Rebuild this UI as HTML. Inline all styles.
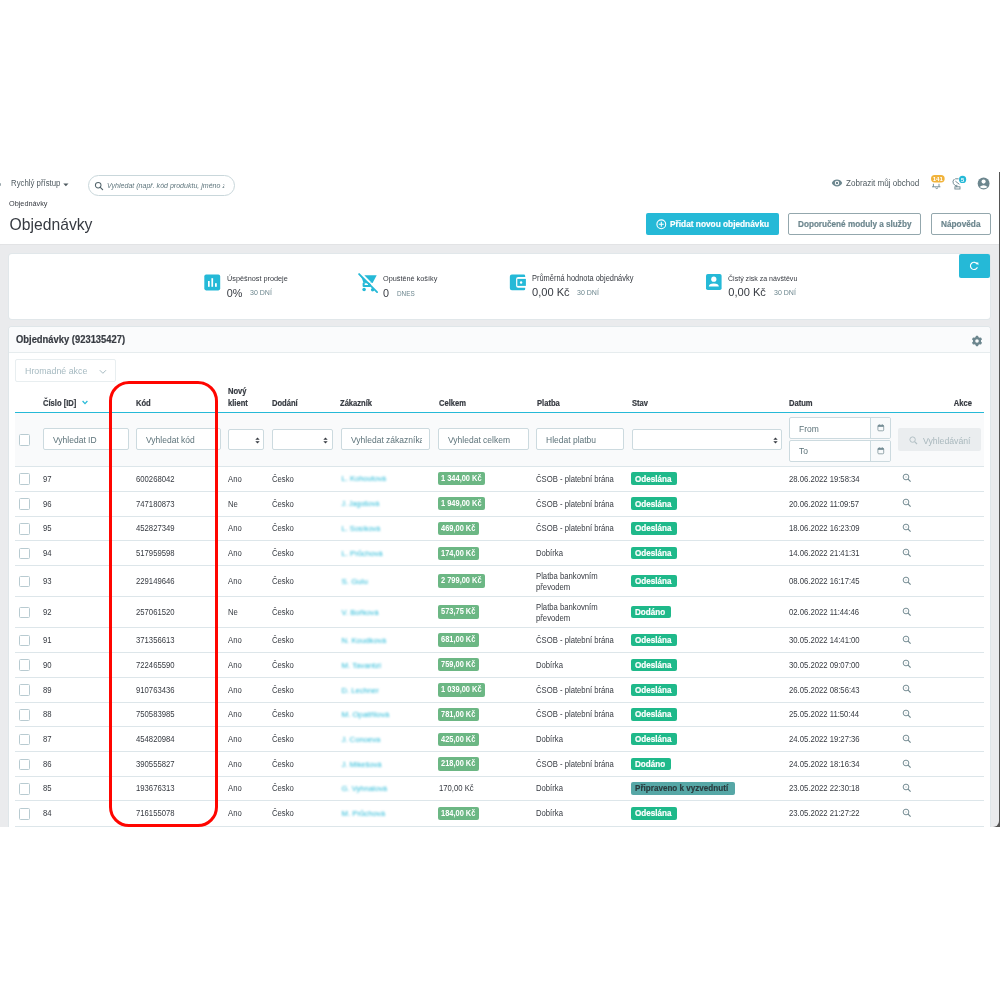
<!DOCTYPE html>
<html><head><meta charset="utf-8"><title>Objednávky</title>
<style>
html,body{margin:0;padding:0;background:#fff;}
body{width:1000px;height:1000px;position:relative;overflow:hidden;font-family:"Liberation Sans",sans-serif;}
.t{position:absolute;white-space:nowrap;}
.b{position:absolute;}
</style></head><body><div id="w" style="position:absolute;left:0;top:0;width:1000px;height:1000px;will-change:transform">
<div class="b" style="left:985.00px;top:172.00px;width:15.00px;height:655.00px;background:#555"></div>
<div class="b" style="left:0.00px;top:243.70px;width:998.80px;height:583.30px;background:#eaebed;border-bottom-right-radius:6px;box-shadow:inset 0 1px 1px rgba(0,0,0,0.035)"></div>
<div class="b" style="left:0.00px;top:172.00px;width:998.80px;height:72.00px;background:#fff"></div>
<div class="b" style="left:0.00px;top:183.00px;width:1.30px;height:3.00px;background:#9aa7ad;border-radius:0 2px 2px 0"></div>
<div class="t" style="left:11.40px;top:179.44px;font-size:8.580px;line-height:8.580px;font-weight:400;color:#4f5a60;transform:scaleX(0.9091);transform-origin:0 0;">Rychlý přístup</div>
<svg class="b" style="left:63px;top:183px" width="6" height="4" viewBox="0 0 6 4"><path d="M0.3 0.5 L5.5 0.5 L2.9 3.3 Z" fill="#4f5a60"/></svg>
<div class="b" style="left:88.00px;top:175.00px;width:147.00px;height:20.60px;box-sizing:border-box;border:1px solid #c9d7db;border-radius:11px;background:#fff"></div>
<svg class="b" style="left:94px;top:181px" width="10" height="10" viewBox="0 0 10 10"><circle cx="4.2" cy="4.2" r="2.8" fill="none" stroke="#51636a" stroke-width="1.05"/><path d="M6.3 6.3 L8.6 8.6" stroke="#51636a" stroke-width="1.2" stroke-linecap="round"/></svg>
<div class="t" style="left:107.20px;top:182.14px;font-size:7.755px;line-height:7.755px;font-weight:400;color:#5f767d;transform:scaleX(0.9091);transform-origin:0 0;font-style:italic;width:129.36px;overflow:hidden">Vyhledat (např. kód produktu, jméno z</div>
<div class="t" style="left:9.00px;top:199.70px;font-size:8.030px;line-height:8.030px;font-weight:400;color:#363a41;transform:scaleX(0.9091);transform-origin:0 0;">Objednávky</div>
<div class="t" style="left:9.60px;top:216.61px;font-size:15.700px;line-height:15.700px;font-weight:400;color:#363a41;">Objednávky</div>
<svg class="b" style="left:831px;top:179.3px;overflow:visible" width="12" height="8" viewBox="0 0 12 8"><path d="M0.8 4 C2.6 -0.6 9.4 -0.6 11.2 4 C9.4 8.6 2.6 8.6 0.8 4 Z" fill="#6c868e"/><circle cx="6" cy="4" r="2.2" fill="#fff"/><circle cx="6" cy="4" r="1.2" fill="#6c868e"/></svg>
<div class="t" style="left:845.70px;top:179.26px;font-size:8.910px;line-height:8.910px;font-weight:400;color:#4f5a60;transform:scaleX(0.9091);transform-origin:0 0;">Zobrazit můj obchod</div>
<svg class="b" style="left:925px;top:172px" width="70" height="23" viewBox="0 0 70 23"><rect x="6" y="3.1" width="13.7" height="7.4" rx="3.7" fill="#f1b33b"/><text x="12.85" y="9.2" font-family="Liberation Sans" font-size="6.2" font-weight="700" fill="#fff" text-anchor="middle">141</text><path d="M7 14.8 L15.4 14.8 M8.4 11.8 V14.8 M14 11.8 V14.8 M10.4 15.8 L11.8 16.6 L13 15.8" stroke="#6c868e" stroke-width="0.9" fill="none"/><path d="M29.4 7 Q27 9 28.4 11.6 Q29.6 13.5 31.6 14.2 M30.2 6.8 L33.6 6.8 M30.4 9.2 L34.4 12.3 M31.8 12.8 V15.2" stroke="#6c868e" stroke-width="0.95" fill="none"/><rect x="29.9" y="14.8" width="5.1" height="2.2" fill="none" stroke="#6c868e" stroke-width="0.9"/><circle cx="37.6" cy="7.4" r="3.6" fill="#25b9d7"/><text x="37.6" y="9.5" font-family="Liberation Sans" font-size="5.8" font-weight="700" fill="#fff" text-anchor="middle">5</text><circle cx="58.6" cy="11.5" r="5.95" fill="#6c868e"/><circle cx="58.6" cy="9.6" r="2.05" fill="#fff"/><path d="M54.6 14.9 Q58.6 11.6 62.6 14.9 Q58.6 17.8 54.6 14.9 Z" fill="#fff"/></svg>
<div class="b" style="left:646.00px;top:213.00px;width:132.90px;height:21.60px;background:#25b9d7;border-radius:2px"></div>
<svg class="b" style="left:656.3px;top:218.7px" width="11" height="11" viewBox="0 0 11 11"><circle cx="5.3" cy="5.3" r="4.4" fill="none" stroke="#fff" stroke-width="1.1"/><path d="M5.3 2.8 V7.8 M2.8 5.3 H7.8" stroke="#fff" stroke-width="1.1"/></svg>
<div class="t" style="left:669.60px;top:220.37px;font-size:9.130px;line-height:9.130px;font-weight:700;color:#fff;transform:scaleX(0.9091);transform-origin:0 0;-webkit-text-stroke:0.2px currentColor;">Přidat novou objednávku</div>
<div class="b" style="left:788.30px;top:212.50px;width:133.20px;height:22.00px;box-sizing:border-box;border:1px solid #93a7ad;border-radius:2px;background:#fff"></div>
<div class="t" style="left:798.00px;top:220.28px;font-size:8.998px;line-height:8.998px;font-weight:700;color:#6c868e;transform:scaleX(0.9091);transform-origin:0 0;-webkit-text-stroke:0.2px currentColor;">Doporučené moduly a služby</div>
<div class="b" style="left:930.50px;top:212.50px;width:60.10px;height:22.00px;box-sizing:border-box;border:1px solid #93a7ad;border-radius:2px;background:#fff"></div>
<div class="t" style="left:940.60px;top:220.19px;font-size:9.108px;line-height:9.108px;font-weight:700;color:#6c868e;transform:scaleX(0.9091);transform-origin:0 0;-webkit-text-stroke:0.2px currentColor;">Nápověda</div>
<div class="b" style="left:9.00px;top:254.40px;width:981.00px;height:64.60px;background:#fff;border-radius:3px;box-shadow:0 0 0 1px #e1e7ea"></div>
<div class="b" style="left:958.60px;top:254.00px;width:31.30px;height:24.00px;background:#25b9d7;border-radius:2px"></div>
<svg class="b" style="left:968px;top:260px" width="12" height="12" viewBox="0 0 12 12"><path d="M9.2 4.2 A3.6 3.6 0 1 0 9.4 7.2" fill="none" stroke="#fff" stroke-width="1.1"/><path d="M7.6 2.4 L10.4 2.4 L10.4 5.2 Z" fill="#fff"/></svg>
<svg class="b" style="left:200px;top:270px" width="24" height="24" viewBox="0 0 24 24"><rect x="4.3" y="4.6" width="15.9" height="15.8" rx="1.8" fill="#25b9d7"/><rect x="8.0" y="11.0" width="1.7" height="5.8" fill="#fff"/><rect x="11.4" y="8.2" width="1.7" height="8.6" fill="#fff"/><rect x="15.0" y="13.2" width="1.8" height="3.6" fill="#fff"/></svg>
<div class="t" style="left:226.80px;top:274.90px;font-size:8.030px;line-height:8.030px;font-weight:400;color:#363a41;transform:scaleX(0.9091);transform-origin:0 0;">Úspěšnost prodeje</div>
<div class="t" style="left:226.80px;top:287.86px;font-size:10.800px;line-height:10.800px;font-weight:400;color:#363a41;">0%</div>
<div class="t" style="left:249.60px;top:288.94px;font-size:7.744px;line-height:7.744px;font-weight:400;color:#6c868e;transform:scaleX(0.9091);transform-origin:0 0;">30 DNÍ</div>
<svg class="b" style="left:355px;top:270px" width="26" height="26" viewBox="0 0 26 26"><path d="M4.3 4.3 L13 13 L8.4 12.8 Q7.8 9.2 4.3 4.3 Z" fill="#25b9d7"/><path fill-rule="evenodd" d="M8.6 12.4 L15 12.4 Q16 12.4 16 13.4 L16 15.9 Q16 16.9 15 16.9 L8.6 16.9 Q7.6 16.9 7.6 15.9 L7.6 13.4 Q7.6 12.4 8.6 12.4 Z M9.8 13.3 L12.6 13.3 L13.3 15.0 L9.6 15.0 Z" fill="#25b9d7"/><path d="M9.3 5.2 L21.7 5.2 L17.6 12.9 L16.9 12.9 Z" fill="#25b9d7"/><circle cx="9.1" cy="19.5" r="1.8" fill="#25b9d7"/><circle cx="17.6" cy="19.7" r="1.7" fill="#25b9d7"/><path d="M5.3 4 L23.3 22 L24.6 22 L6.6 4 Z" fill="#fff"/><path d="M4.1 4.1 L22.1 22.1" stroke="#25b9d7" stroke-width="1.85" stroke-linecap="round"/></svg>
<div class="t" style="left:382.60px;top:274.90px;font-size:8.030px;line-height:8.030px;font-weight:400;color:#363a41;transform:scaleX(0.9091);transform-origin:0 0;">Opuštěné košíky</div>
<div class="t" style="left:383.00px;top:287.86px;font-size:10.800px;line-height:10.800px;font-weight:400;color:#363a41;">0</div>
<div class="t" style="left:396.80px;top:289.54px;font-size:7.040px;line-height:7.040px;font-weight:400;color:#6c868e;transform:scaleX(0.9091);transform-origin:0 0;">DNES</div>
<svg class="b" style="left:506px;top:271px" width="24" height="24" viewBox="0 0 24 24"><path d="M3.84 5.6 Q3.84 3.6 5.84 3.6 L17.8 3.6 Q19.2 3.6 19.2 4.9 L19.2 5.9 L12.1 5.9 Q10.1 5.9 10.1 7.9 L10.1 14.8 Q10.1 16.8 12.1 16.8 L19.2 16.8 L19.2 17.9 Q19.2 19.2 17.8 19.2 L5.84 19.2 Q3.84 19.2 3.84 17.2 Z" fill="#25b9d7"/><rect x="11.3" y="7.9" width="8.6" height="7" fill="#25b9d7"/><circle cx="15.1" cy="11.5" r="1.2" fill="#fff"/></svg>
<div class="t" style="left:531.50px;top:274.76px;font-size:8.195px;line-height:8.195px;font-weight:400;color:#363a41;transform:scaleX(0.9091);transform-origin:0 0;">Průměrná hodnota objednávky</div>
<div class="t" style="left:532.00px;top:287.40px;font-size:11.100px;line-height:11.100px;font-weight:400;color:#363a41;">0,00 Kč</div>
<div class="t" style="left:577.30px;top:288.94px;font-size:7.744px;line-height:7.744px;font-weight:400;color:#6c868e;transform:scaleX(0.9091);transform-origin:0 0;">30 DNÍ</div>
<svg class="b" style="left:706.2px;top:274.25px" width="16" height="16" viewBox="0 0 16 16"><rect x="0" y="0" width="15.6" height="16" rx="1.8" fill="#25b9d7"/><circle cx="7.8" cy="5.2" r="2.6" fill="#fff"/><path d="M2.8 12.5 Q2.8 9.5 7.8 9.5 Q12.8 9.5 12.8 12.5 Z" fill="#fff"/></svg>
<div class="t" style="left:728.20px;top:275.14px;font-size:7.755px;line-height:7.755px;font-weight:400;color:#363a41;transform:scaleX(0.9091);transform-origin:0 0;">Čistý zisk za návštěvu</div>
<div class="t" style="left:728.30px;top:287.40px;font-size:11.100px;line-height:11.100px;font-weight:400;color:#363a41;">0,00 Kč</div>
<div class="t" style="left:774.00px;top:288.94px;font-size:7.744px;line-height:7.744px;font-weight:400;color:#6c868e;transform:scaleX(0.9091);transform-origin:0 0;">30 DNÍ</div>
<div class="b" style="left:9.00px;top:326.50px;width:981.00px;height:510.00px;background:#fff;border-radius:3px 3px 0 0;box-shadow:0 0 0 1px #dfe6e9"></div>
<div class="b" style="left:9.00px;top:326.50px;width:981.00px;height:26.30px;background:#fafbfc;border-radius:3px 3px 0 0;border-bottom:1px solid #e6ecee;box-sizing:border-box"></div>
<div class="t" style="left:15.50px;top:334.95px;font-size:10.340px;line-height:10.340px;font-weight:700;color:#363a41;transform:scaleX(0.9091);transform-origin:0 0;-webkit-text-stroke:0.2px currentColor;">Objednávky (923135427)</div>
<svg class="b" style="left:971px;top:335px" width="12" height="12" viewBox="0 0 12 12"><g fill="#6c868e"><circle cx="6" cy="6" r="4.1"/><rect x="4.7" y="0.8" width="2.6" height="3" rx="0.6" transform="rotate(0 6 6)"/><rect x="4.7" y="0.8" width="2.6" height="3" rx="0.6" transform="rotate(60 6 6)"/><rect x="4.7" y="0.8" width="2.6" height="3" rx="0.6" transform="rotate(120 6 6)"/><rect x="4.7" y="0.8" width="2.6" height="3" rx="0.6" transform="rotate(180 6 6)"/><rect x="4.7" y="0.8" width="2.6" height="3" rx="0.6" transform="rotate(240 6 6)"/><rect x="4.7" y="0.8" width="2.6" height="3" rx="0.6" transform="rotate(300 6 6)"/></g><circle cx="6" cy="6" r="1.8" fill="#fafbfc"/></svg>
<div class="b" style="left:15.30px;top:359.20px;width:100.50px;height:22.40px;box-sizing:border-box;border:1px solid #e8eef0;border-radius:2px;background:#fff"></div>
<div class="t" style="left:25.00px;top:366.06px;font-size:9.735px;line-height:9.735px;font-weight:400;color:#a6bac1;transform:scaleX(0.9091);transform-origin:0 0;">Hromadné akce</div>
<svg class="b" style="left:98.6px;top:368.6px" width="8" height="6" viewBox="0 0 8 6"><path d="M0.8 1.2 L3.9 4.3 L7 1.2" stroke="#a6bac1" stroke-width="1" fill="none"/></svg>
<div class="t" style="left:43.00px;top:398.62px;font-size:8.360px;line-height:8.360px;font-weight:700;color:#363a41;transform:scaleX(0.9091);transform-origin:0 0;-webkit-text-stroke:0.2px currentColor;">Číslo [ID]</div>
<svg class="b" style="left:81.8px;top:400.2px" width="6" height="5" viewBox="0 0 6 5"><path d="M0.6 1 L3 3.6 L5.4 1" stroke="#25b9d7" stroke-width="1.2" fill="none"/></svg>
<div class="t" style="left:136.40px;top:398.62px;font-size:8.360px;line-height:8.360px;font-weight:700;color:#363a41;transform:scaleX(0.9091);transform-origin:0 0;-webkit-text-stroke:0.2px currentColor;">Kód</div>
<div class="t" style="left:228.20px;top:386.92px;font-size:8.360px;line-height:8.360px;font-weight:700;color:#363a41;transform:scaleX(0.9091);transform-origin:0 0;-webkit-text-stroke:0.2px currentColor;">Nový</div>
<div class="t" style="left:228.20px;top:398.62px;font-size:8.360px;line-height:8.360px;font-weight:700;color:#363a41;transform:scaleX(0.9091);transform-origin:0 0;-webkit-text-stroke:0.2px currentColor;">klient</div>
<div class="t" style="left:272.00px;top:398.62px;font-size:8.360px;line-height:8.360px;font-weight:700;color:#363a41;transform:scaleX(0.9091);transform-origin:0 0;-webkit-text-stroke:0.2px currentColor;">Dodání</div>
<div class="t" style="left:340.00px;top:398.62px;font-size:8.360px;line-height:8.360px;font-weight:700;color:#363a41;transform:scaleX(0.9091);transform-origin:0 0;-webkit-text-stroke:0.2px currentColor;">Zákazník</div>
<div class="t" style="left:438.75px;top:398.62px;font-size:8.360px;line-height:8.360px;font-weight:700;color:#363a41;transform:scaleX(0.9091);transform-origin:0 0;-webkit-text-stroke:0.2px currentColor;">Celkem</div>
<div class="t" style="left:536.75px;top:398.62px;font-size:8.360px;line-height:8.360px;font-weight:700;color:#363a41;transform:scaleX(0.9091);transform-origin:0 0;-webkit-text-stroke:0.2px currentColor;">Platba</div>
<div class="t" style="left:631.50px;top:398.62px;font-size:8.360px;line-height:8.360px;font-weight:700;color:#363a41;transform:scaleX(0.9091);transform-origin:0 0;-webkit-text-stroke:0.2px currentColor;">Stav</div>
<div class="t" style="left:789.25px;top:398.62px;font-size:8.360px;line-height:8.360px;font-weight:700;color:#363a41;transform:scaleX(0.9091);transform-origin:0 0;-webkit-text-stroke:0.2px currentColor;">Datum</div>
<div class="t" style="right:28.00px;top:398.62px;font-size:8.360px;line-height:8.360px;font-weight:700;color:#363a41;transform:scaleX(0.9091);transform-origin:100% 0;-webkit-text-stroke:0.2px currentColor;">Akce</div>
<div class="b" style="left:15.00px;top:411.50px;width:969.00px;height:1.60px;background:#25b9d7"></div>
<div class="b" style="left:15.00px;top:413.30px;width:969.00px;height:53.00px;background:#f9fafb"></div>
<div class="b" style="left:15.00px;top:465.80px;width:969.00px;height:1.00px;background:#dde6ea"></div>
<div class="b" style="left:18.90px;top:433.90px;width:11.40px;height:11.80px;box-sizing:border-box;border:1.5px solid #b8cbd1;border-radius:1.5px;background:#fff"></div>
<div class="b" style="left:43.00px;top:428.10px;width:85.50px;height:22.40px;box-sizing:border-box;border:1px solid #ccdadf;border-radius:2px;background:#fff"></div>
<div class="t" style="left:53.00px;top:436.09px;font-size:9.350px;line-height:9.350px;font-weight:400;color:#5d737a;transform:scaleX(0.9091);transform-origin:0 0;width:78.65px;overflow:hidden">Vyhledat ID</div>
<div class="b" style="left:136.40px;top:428.10px;width:84.60px;height:22.40px;box-sizing:border-box;border:1px solid #ccdadf;border-radius:2px;background:#fff"></div>
<div class="t" style="left:146.40px;top:436.09px;font-size:9.350px;line-height:9.350px;font-weight:400;color:#5d737a;transform:scaleX(0.9091);transform-origin:0 0;width:77.66px;overflow:hidden">Vyhledat kód</div>
<div class="b" style="left:228.20px;top:429.20px;width:35.50px;height:20.80px;box-sizing:border-box;border:1px solid #ccdadf;border-radius:2px;background:#fff"></div>
<div class="b" style="left:272.00px;top:429.20px;width:60.50px;height:20.80px;box-sizing:border-box;border:1px solid #ccdadf;border-radius:2px;background:#fff"></div>
<div class="b" style="left:340.50px;top:428.10px;width:89.80px;height:22.40px;box-sizing:border-box;border:1px solid #ccdadf;border-radius:2px;background:#fff"></div>
<div class="t" style="left:350.50px;top:436.09px;font-size:9.350px;line-height:9.350px;font-weight:400;color:#5d737a;transform:scaleX(0.9091);transform-origin:0 0;width:77.55px;overflow:hidden">Vyhledat zákazníka</div>
<div class="b" style="left:438.25px;top:428.10px;width:90.50px;height:22.40px;box-sizing:border-box;border:1px solid #ccdadf;border-radius:2px;background:#fff"></div>
<div class="t" style="left:448.25px;top:436.09px;font-size:9.350px;line-height:9.350px;font-weight:400;color:#5d737a;transform:scaleX(0.9091);transform-origin:0 0;width:84.15px;overflow:hidden">Vyhledat celkem</div>
<div class="b" style="left:536.25px;top:428.10px;width:87.80px;height:22.40px;box-sizing:border-box;border:1px solid #ccdadf;border-radius:2px;background:#fff"></div>
<div class="t" style="left:546.25px;top:436.09px;font-size:9.350px;line-height:9.350px;font-weight:400;color:#5d737a;transform:scaleX(0.9091);transform-origin:0 0;width:81.18px;overflow:hidden">Hledat platbu</div>
<div class="b" style="left:631.50px;top:429.20px;width:150.00px;height:20.80px;box-sizing:border-box;border:1px solid #ccdadf;border-radius:2px;background:#fff"></div>
<svg class="b" style="left:254.8px;top:436.5px" width="5" height="7" viewBox="0 0 5 7"><path d="M0.3 2.8 L2.5 0.4 L4.7 2.8 Z M0.3 4.2 L2.5 6.6 L4.7 4.2 Z" fill="#363a41"/></svg>
<svg class="b" style="left:323.3px;top:436.5px" width="5" height="7" viewBox="0 0 5 7"><path d="M0.3 2.8 L2.5 0.4 L4.7 2.8 Z M0.3 4.2 L2.5 6.6 L4.7 4.2 Z" fill="#363a41"/></svg>
<svg class="b" style="left:772.8px;top:436.5px" width="5" height="7" viewBox="0 0 5 7"><path d="M0.3 2.8 L2.5 0.4 L4.7 2.8 Z M0.3 4.2 L2.5 6.6 L4.7 4.2 Z" fill="#363a41"/></svg>
<div class="b" style="left:789.25px;top:417.30px;width:102.00px;height:22.20px;box-sizing:border-box;border:1px solid #ccdadf;border-radius:2px;background:#fff"></div>
<div class="b" style="left:789.25px;top:439.80px;width:102.00px;height:22.60px;box-sizing:border-box;border:1px solid #ccdadf;border-radius:2px;background:#fff"></div>
<div class="b" style="left:870.40px;top:418.30px;width:18.85px;height:20.20px;background:#f8fafb;border-left:1px solid #ccdadf;border-radius:0 1px 1px 0"></div>
<div class="b" style="left:870.40px;top:440.80px;width:18.85px;height:20.60px;background:#f8fafb;border-left:1px solid #ccdadf;border-radius:0 1px 1px 0"></div>
<div class="t" style="left:798.50px;top:424.59px;font-size:9.350px;line-height:9.350px;font-weight:400;color:#5d737a;transform:scaleX(0.9091);transform-origin:0 0;">From</div>
<div class="t" style="left:798.50px;top:447.39px;font-size:9.350px;line-height:9.350px;font-weight:400;color:#5d737a;transform:scaleX(0.9091);transform-origin:0 0;">To</div>
<svg class="b" style="left:876.8px;top:424.2px" width="8" height="8" viewBox="0 0 8 8"><rect x="0.9" y="1.2" width="5.8" height="5.6" rx="0.9" fill="none" stroke="#7d9399" stroke-width="0.8"/><rect x="0.9" y="1.2" width="5.8" height="1.6" fill="#6c868e"/><rect x="1.9" y="0.4" width="0.8" height="1.2" fill="#6c868e"/><rect x="4.9" y="0.4" width="0.8" height="1.2" fill="#6c868e"/></svg>
<svg class="b" style="left:876.8px;top:447.2px" width="8" height="8" viewBox="0 0 8 8"><rect x="0.9" y="1.2" width="5.8" height="5.6" rx="0.9" fill="none" stroke="#7d9399" stroke-width="0.8"/><rect x="0.9" y="1.2" width="5.8" height="1.6" fill="#6c868e"/><rect x="1.9" y="0.4" width="0.8" height="1.2" fill="#6c868e"/><rect x="4.9" y="0.4" width="0.8" height="1.2" fill="#6c868e"/></svg>
<div class="b" style="left:898.00px;top:428.30px;width:82.70px;height:23.10px;background:#eaedef;border-radius:2px"></div>
<svg class="b" style="left:909.2px;top:435.5px" width="9" height="9" viewBox="0 0 9 9"><circle cx="3.6" cy="3.6" r="2.7" fill="none" stroke="#b3c0c5" stroke-width="1"/><path d="M5.6 5.6 L8 8" stroke="#b3c0c5" stroke-width="1.2"/></svg>
<div class="t" style="left:923.00px;top:435.60px;font-size:9.570px;line-height:9.570px;font-weight:400;color:#a9b8bd;transform:scaleX(0.9091);transform-origin:0 0;">Vyhledávání</div>
<div class="b" style="left:15.00px;top:490.70px;width:969.00px;height:1.00px;background:#dde6ea"></div>
<div class="b" style="left:18.90px;top:473.25px;width:11.40px;height:11.60px;box-sizing:border-box;border:1.5px solid #b8cbd1;border-radius:1.5px;background:#fff"></div>
<div class="t" style="left:43.00px;top:474.58px;font-size:8.470px;line-height:8.470px;font-weight:400;color:#363a41;transform:scaleX(0.9091);transform-origin:0 0;">97</div>
<div class="t" style="left:136.25px;top:474.58px;font-size:8.470px;line-height:8.470px;font-weight:400;color:#363a41;transform:scaleX(0.9091);transform-origin:0 0;">600268042</div>
<div class="t" style="left:228.00px;top:474.58px;font-size:8.470px;line-height:8.470px;font-weight:400;color:#363a41;transform:scaleX(0.9091);transform-origin:0 0;">Ano</div>
<div class="t" style="left:272.00px;top:474.58px;font-size:8.470px;line-height:8.470px;font-weight:400;color:#363a41;transform:scaleX(0.9091);transform-origin:0 0;">Česko</div>
<svg class="b" style="left:338px;top:470.45px;filter:blur(1.0px);opacity:1" width="60" height="16" viewBox="0 0 60 16"><text x="3.5" y="10.80" font-family="Liberation Sans" font-size="7.7" fill="#25b9d7" textLength="44.5" lengthAdjust="spacingAndGlyphs">L. Kohoutová</text></svg>
<div class="t" style="left:438.4px;top:472.10px;height:13.3px;line-height:13.3px;padding:0 2.9px 0 3.1px;background:#6cb784;border-radius:2px;font-size:7.45px;font-weight:700;color:#fff"><span style="visibility:hidden">1 344,00 Kč</span><span style="position:absolute;left:3.1px;top:0;font-size:8.195px;transform:scaleX(0.9091);transform-origin:0 0">1 344,00 Kč</span></div>
<div class="t" style="left:536.00px;top:474.58px;font-size:8.470px;line-height:8.470px;font-weight:400;color:#363a41;transform:scaleX(0.9091);transform-origin:0 0;">ČSOB - platební brána</div>
<div class="b" style="left:631.00px;top:472.45px;width:45.80px;height:12.60px;background:#1fb98a;border-radius:2px"></div>
<div class="t" style="left:634.70px;top:474.61px;font-size:8.910px;line-height:8.910px;font-weight:700;color:#fff;transform:scaleX(0.9091);transform-origin:0 0;-webkit-text-stroke:0.2px currentColor;">Odeslána</div>
<div class="t" style="left:789.00px;top:474.58px;font-size:8.470px;line-height:8.470px;font-weight:400;color:#363a41;transform:scaleX(0.9091);transform-origin:0 0;">28.06.2022 19:58:34</div>
<svg class="b" style="left:902px;top:473.25px" width="10" height="10" viewBox="0 0 10 10"><circle cx="4" cy="4" r="2.85" fill="none" stroke="#6f878e" stroke-width="0.95"/><circle cx="4" cy="4" r="0.7" fill="#b5c3c7"/><path d="M6.1 6.1 L8.6 8.6" stroke="#6f878e" stroke-width="1.15"/></svg>
<div class="b" style="left:15.00px;top:515.70px;width:969.00px;height:1.00px;background:#dde6ea"></div>
<div class="b" style="left:18.90px;top:498.20px;width:11.40px;height:11.60px;box-sizing:border-box;border:1.5px solid #b8cbd1;border-radius:1.5px;background:#fff"></div>
<div class="t" style="left:43.00px;top:499.53px;font-size:8.470px;line-height:8.470px;font-weight:400;color:#363a41;transform:scaleX(0.9091);transform-origin:0 0;">96</div>
<div class="t" style="left:136.25px;top:499.53px;font-size:8.470px;line-height:8.470px;font-weight:400;color:#363a41;transform:scaleX(0.9091);transform-origin:0 0;">747180873</div>
<div class="t" style="left:228.00px;top:499.53px;font-size:8.470px;line-height:8.470px;font-weight:400;color:#363a41;transform:scaleX(0.9091);transform-origin:0 0;">Ne</div>
<div class="t" style="left:272.00px;top:499.53px;font-size:8.470px;line-height:8.470px;font-weight:400;color:#363a41;transform:scaleX(0.9091);transform-origin:0 0;">Česko</div>
<svg class="b" style="left:338px;top:495.40px;filter:blur(1.0px);opacity:1" width="60" height="16" viewBox="0 0 60 16"><text x="3.5" y="10.80" font-family="Liberation Sans" font-size="7.7" fill="#25b9d7" textLength="37.8" lengthAdjust="spacingAndGlyphs">J. Jagošová</text></svg>
<div class="t" style="left:438.4px;top:497.05px;height:13.3px;line-height:13.3px;padding:0 2.9px 0 3.1px;background:#6cb784;border-radius:2px;font-size:7.45px;font-weight:700;color:#fff"><span style="visibility:hidden">1 949,00 Kč</span><span style="position:absolute;left:3.1px;top:0;font-size:8.195px;transform:scaleX(0.9091);transform-origin:0 0">1 949,00 Kč</span></div>
<div class="t" style="left:536.00px;top:499.53px;font-size:8.470px;line-height:8.470px;font-weight:400;color:#363a41;transform:scaleX(0.9091);transform-origin:0 0;">ČSOB - platební brána</div>
<div class="b" style="left:631.00px;top:497.40px;width:45.80px;height:12.60px;background:#1fb98a;border-radius:2px"></div>
<div class="t" style="left:634.70px;top:499.56px;font-size:8.910px;line-height:8.910px;font-weight:700;color:#fff;transform:scaleX(0.9091);transform-origin:0 0;-webkit-text-stroke:0.2px currentColor;">Odeslána</div>
<div class="t" style="left:789.00px;top:499.53px;font-size:8.470px;line-height:8.470px;font-weight:400;color:#363a41;transform:scaleX(0.9091);transform-origin:0 0;">20.06.2022 11:09:57</div>
<svg class="b" style="left:902px;top:498.20px" width="10" height="10" viewBox="0 0 10 10"><circle cx="4" cy="4" r="2.85" fill="none" stroke="#6f878e" stroke-width="0.95"/><circle cx="4" cy="4" r="0.7" fill="#b5c3c7"/><path d="M6.1 6.1 L8.6 8.6" stroke="#6f878e" stroke-width="1.15"/></svg>
<div class="b" style="left:15.00px;top:540.20px;width:969.00px;height:1.00px;background:#dde6ea"></div>
<div class="b" style="left:18.90px;top:522.95px;width:11.40px;height:11.60px;box-sizing:border-box;border:1.5px solid #b8cbd1;border-radius:1.5px;background:#fff"></div>
<div class="t" style="left:43.00px;top:524.28px;font-size:8.470px;line-height:8.470px;font-weight:400;color:#363a41;transform:scaleX(0.9091);transform-origin:0 0;">95</div>
<div class="t" style="left:136.25px;top:524.28px;font-size:8.470px;line-height:8.470px;font-weight:400;color:#363a41;transform:scaleX(0.9091);transform-origin:0 0;">452827349</div>
<div class="t" style="left:228.00px;top:524.28px;font-size:8.470px;line-height:8.470px;font-weight:400;color:#363a41;transform:scaleX(0.9091);transform-origin:0 0;">Ano</div>
<div class="t" style="left:272.00px;top:524.28px;font-size:8.470px;line-height:8.470px;font-weight:400;color:#363a41;transform:scaleX(0.9091);transform-origin:0 0;">Česko</div>
<svg class="b" style="left:338px;top:520.15px;filter:blur(1.0px);opacity:1" width="60" height="16" viewBox="0 0 60 16"><text x="3.5" y="10.80" font-family="Liberation Sans" font-size="7.7" fill="#25b9d7" textLength="38.7" lengthAdjust="spacingAndGlyphs">L. Sosíková</text></svg>
<div class="t" style="left:438.4px;top:521.80px;height:13.3px;line-height:13.3px;padding:0 2.9px 0 3.1px;background:#6cb784;border-radius:2px;font-size:7.45px;font-weight:700;color:#fff"><span style="visibility:hidden">469,00 Kč</span><span style="position:absolute;left:3.1px;top:0;font-size:8.195px;transform:scaleX(0.9091);transform-origin:0 0">469,00 Kč</span></div>
<div class="t" style="left:536.00px;top:524.28px;font-size:8.470px;line-height:8.470px;font-weight:400;color:#363a41;transform:scaleX(0.9091);transform-origin:0 0;">ČSOB - platební brána</div>
<div class="b" style="left:631.00px;top:522.15px;width:45.80px;height:12.60px;background:#1fb98a;border-radius:2px"></div>
<div class="t" style="left:634.70px;top:524.31px;font-size:8.910px;line-height:8.910px;font-weight:700;color:#fff;transform:scaleX(0.9091);transform-origin:0 0;-webkit-text-stroke:0.2px currentColor;">Odeslána</div>
<div class="t" style="left:789.00px;top:524.28px;font-size:8.470px;line-height:8.470px;font-weight:400;color:#363a41;transform:scaleX(0.9091);transform-origin:0 0;">18.06.2022 16:23:09</div>
<svg class="b" style="left:902px;top:522.95px" width="10" height="10" viewBox="0 0 10 10"><circle cx="4" cy="4" r="2.85" fill="none" stroke="#6f878e" stroke-width="0.95"/><circle cx="4" cy="4" r="0.7" fill="#b5c3c7"/><path d="M6.1 6.1 L8.6 8.6" stroke="#6f878e" stroke-width="1.15"/></svg>
<div class="b" style="left:15.00px;top:565.10px;width:969.00px;height:1.00px;background:#dde6ea"></div>
<div class="b" style="left:18.90px;top:547.65px;width:11.40px;height:11.60px;box-sizing:border-box;border:1.5px solid #b8cbd1;border-radius:1.5px;background:#fff"></div>
<div class="t" style="left:43.00px;top:548.98px;font-size:8.470px;line-height:8.470px;font-weight:400;color:#363a41;transform:scaleX(0.9091);transform-origin:0 0;">94</div>
<div class="t" style="left:136.25px;top:548.98px;font-size:8.470px;line-height:8.470px;font-weight:400;color:#363a41;transform:scaleX(0.9091);transform-origin:0 0;">517959598</div>
<div class="t" style="left:228.00px;top:548.98px;font-size:8.470px;line-height:8.470px;font-weight:400;color:#363a41;transform:scaleX(0.9091);transform-origin:0 0;">Ano</div>
<div class="t" style="left:272.00px;top:548.98px;font-size:8.470px;line-height:8.470px;font-weight:400;color:#363a41;transform:scaleX(0.9091);transform-origin:0 0;">Česko</div>
<svg class="b" style="left:338px;top:544.85px;filter:blur(1.0px);opacity:1" width="60" height="16" viewBox="0 0 60 16"><text x="3.5" y="10.80" font-family="Liberation Sans" font-size="7.7" fill="#25b9d7" textLength="41.1" lengthAdjust="spacingAndGlyphs">L. Průchová</text></svg>
<div class="t" style="left:438.4px;top:546.50px;height:13.3px;line-height:13.3px;padding:0 2.9px 0 3.1px;background:#6cb784;border-radius:2px;font-size:7.45px;font-weight:700;color:#fff"><span style="visibility:hidden">174,00 Kč</span><span style="position:absolute;left:3.1px;top:0;font-size:8.195px;transform:scaleX(0.9091);transform-origin:0 0">174,00 Kč</span></div>
<div class="t" style="left:536.00px;top:548.98px;font-size:8.470px;line-height:8.470px;font-weight:400;color:#363a41;transform:scaleX(0.9091);transform-origin:0 0;">Dobírka</div>
<div class="b" style="left:631.00px;top:546.85px;width:45.80px;height:12.60px;background:#1fb98a;border-radius:2px"></div>
<div class="t" style="left:634.70px;top:549.01px;font-size:8.910px;line-height:8.910px;font-weight:700;color:#fff;transform:scaleX(0.9091);transform-origin:0 0;-webkit-text-stroke:0.2px currentColor;">Odeslána</div>
<div class="t" style="left:789.00px;top:548.98px;font-size:8.470px;line-height:8.470px;font-weight:400;color:#363a41;transform:scaleX(0.9091);transform-origin:0 0;">14.06.2022 21:41:31</div>
<svg class="b" style="left:902px;top:547.65px" width="10" height="10" viewBox="0 0 10 10"><circle cx="4" cy="4" r="2.85" fill="none" stroke="#6f878e" stroke-width="0.95"/><circle cx="4" cy="4" r="0.7" fill="#b5c3c7"/><path d="M6.1 6.1 L8.6 8.6" stroke="#6f878e" stroke-width="1.15"/></svg>
<div class="b" style="left:15.00px;top:595.90px;width:969.00px;height:1.00px;background:#dde6ea"></div>
<div class="b" style="left:18.90px;top:575.50px;width:11.40px;height:11.60px;box-sizing:border-box;border:1.5px solid #b8cbd1;border-radius:1.5px;background:#fff"></div>
<div class="t" style="left:43.00px;top:576.83px;font-size:8.470px;line-height:8.470px;font-weight:400;color:#363a41;transform:scaleX(0.9091);transform-origin:0 0;">93</div>
<div class="t" style="left:136.25px;top:576.83px;font-size:8.470px;line-height:8.470px;font-weight:400;color:#363a41;transform:scaleX(0.9091);transform-origin:0 0;">229149646</div>
<div class="t" style="left:228.00px;top:576.83px;font-size:8.470px;line-height:8.470px;font-weight:400;color:#363a41;transform:scaleX(0.9091);transform-origin:0 0;">Ano</div>
<div class="t" style="left:272.00px;top:576.83px;font-size:8.470px;line-height:8.470px;font-weight:400;color:#363a41;transform:scaleX(0.9091);transform-origin:0 0;">Česko</div>
<svg class="b" style="left:338px;top:572.70px;filter:blur(1.0px);opacity:1" width="60" height="16" viewBox="0 0 60 16"><text x="3.5" y="10.80" font-family="Liberation Sans" font-size="7.7" fill="#25b9d7" textLength="26.3" lengthAdjust="spacingAndGlyphs">S. Gulu</text></svg>
<div class="t" style="left:438.4px;top:574.35px;height:13.3px;line-height:13.3px;padding:0 2.9px 0 3.1px;background:#6cb784;border-radius:2px;font-size:7.45px;font-weight:700;color:#fff"><span style="visibility:hidden">2 799,00 Kč</span><span style="position:absolute;left:3.1px;top:0;font-size:8.195px;transform:scaleX(0.9091);transform-origin:0 0">2 799,00 Kč</span></div>
<div class="t" style="left:536.00px;top:572.13px;font-size:8.470px;line-height:8.470px;font-weight:400;color:#363a41;transform:scaleX(0.9091);transform-origin:0 0;">Platba bankovním</div>
<div class="t" style="left:536.00px;top:583.33px;font-size:8.470px;line-height:8.470px;font-weight:400;color:#363a41;transform:scaleX(0.9091);transform-origin:0 0;">převodem</div>
<div class="b" style="left:631.00px;top:574.70px;width:45.80px;height:12.60px;background:#1fb98a;border-radius:2px"></div>
<div class="t" style="left:634.70px;top:576.86px;font-size:8.910px;line-height:8.910px;font-weight:700;color:#fff;transform:scaleX(0.9091);transform-origin:0 0;-webkit-text-stroke:0.2px currentColor;">Odeslána</div>
<div class="t" style="left:789.00px;top:576.83px;font-size:8.470px;line-height:8.470px;font-weight:400;color:#363a41;transform:scaleX(0.9091);transform-origin:0 0;">08.06.2022 16:17:45</div>
<svg class="b" style="left:902px;top:575.50px" width="10" height="10" viewBox="0 0 10 10"><circle cx="4" cy="4" r="2.85" fill="none" stroke="#6f878e" stroke-width="0.95"/><circle cx="4" cy="4" r="0.7" fill="#b5c3c7"/><path d="M6.1 6.1 L8.6 8.6" stroke="#6f878e" stroke-width="1.15"/></svg>
<div class="b" style="left:15.00px;top:627.30px;width:969.00px;height:1.00px;background:#dde6ea"></div>
<div class="b" style="left:18.90px;top:606.60px;width:11.40px;height:11.60px;box-sizing:border-box;border:1.5px solid #b8cbd1;border-radius:1.5px;background:#fff"></div>
<div class="t" style="left:43.00px;top:607.93px;font-size:8.470px;line-height:8.470px;font-weight:400;color:#363a41;transform:scaleX(0.9091);transform-origin:0 0;">92</div>
<div class="t" style="left:136.25px;top:607.93px;font-size:8.470px;line-height:8.470px;font-weight:400;color:#363a41;transform:scaleX(0.9091);transform-origin:0 0;">257061520</div>
<div class="t" style="left:228.00px;top:607.93px;font-size:8.470px;line-height:8.470px;font-weight:400;color:#363a41;transform:scaleX(0.9091);transform-origin:0 0;">Ne</div>
<div class="t" style="left:272.00px;top:607.93px;font-size:8.470px;line-height:8.470px;font-weight:400;color:#363a41;transform:scaleX(0.9091);transform-origin:0 0;">Česko</div>
<svg class="b" style="left:338px;top:603.80px;filter:blur(1.0px);opacity:1" width="60" height="16" viewBox="0 0 60 16"><text x="3.5" y="10.80" font-family="Liberation Sans" font-size="7.7" fill="#25b9d7" textLength="37" lengthAdjust="spacingAndGlyphs">V. Bořková</text></svg>
<div class="t" style="left:438.4px;top:605.45px;height:13.3px;line-height:13.3px;padding:0 2.9px 0 3.1px;background:#6cb784;border-radius:2px;font-size:7.45px;font-weight:700;color:#fff"><span style="visibility:hidden">573,75 Kč</span><span style="position:absolute;left:3.1px;top:0;font-size:8.195px;transform:scaleX(0.9091);transform-origin:0 0">573,75 Kč</span></div>
<div class="t" style="left:536.00px;top:603.23px;font-size:8.470px;line-height:8.470px;font-weight:400;color:#363a41;transform:scaleX(0.9091);transform-origin:0 0;">Platba bankovním</div>
<div class="t" style="left:536.00px;top:614.43px;font-size:8.470px;line-height:8.470px;font-weight:400;color:#363a41;transform:scaleX(0.9091);transform-origin:0 0;">převodem</div>
<div class="b" style="left:631.00px;top:605.80px;width:39.50px;height:12.60px;background:#1fb98a;border-radius:2px"></div>
<div class="t" style="left:634.70px;top:607.96px;font-size:8.910px;line-height:8.910px;font-weight:700;color:#fff;transform:scaleX(0.9091);transform-origin:0 0;-webkit-text-stroke:0.2px currentColor;">Dodáno</div>
<div class="t" style="left:789.00px;top:607.93px;font-size:8.470px;line-height:8.470px;font-weight:400;color:#363a41;transform:scaleX(0.9091);transform-origin:0 0;">02.06.2022 11:44:46</div>
<svg class="b" style="left:902px;top:606.60px" width="10" height="10" viewBox="0 0 10 10"><circle cx="4" cy="4" r="2.85" fill="none" stroke="#6f878e" stroke-width="0.95"/><circle cx="4" cy="4" r="0.7" fill="#b5c3c7"/><path d="M6.1 6.1 L8.6 8.6" stroke="#6f878e" stroke-width="1.15"/></svg>
<div class="b" style="left:15.00px;top:651.90px;width:969.00px;height:1.00px;background:#dde6ea"></div>
<div class="b" style="left:18.90px;top:634.60px;width:11.40px;height:11.60px;box-sizing:border-box;border:1.5px solid #b8cbd1;border-radius:1.5px;background:#fff"></div>
<div class="t" style="left:43.00px;top:635.93px;font-size:8.470px;line-height:8.470px;font-weight:400;color:#363a41;transform:scaleX(0.9091);transform-origin:0 0;">91</div>
<div class="t" style="left:136.25px;top:635.93px;font-size:8.470px;line-height:8.470px;font-weight:400;color:#363a41;transform:scaleX(0.9091);transform-origin:0 0;">371356613</div>
<div class="t" style="left:228.00px;top:635.93px;font-size:8.470px;line-height:8.470px;font-weight:400;color:#363a41;transform:scaleX(0.9091);transform-origin:0 0;">Ano</div>
<div class="t" style="left:272.00px;top:635.93px;font-size:8.470px;line-height:8.470px;font-weight:400;color:#363a41;transform:scaleX(0.9091);transform-origin:0 0;">Česko</div>
<svg class="b" style="left:338px;top:631.80px;filter:blur(1.0px);opacity:1" width="60" height="16" viewBox="0 0 60 16"><text x="3.5" y="10.80" font-family="Liberation Sans" font-size="7.7" fill="#25b9d7" textLength="44.5" lengthAdjust="spacingAndGlyphs">N. Koudková</text></svg>
<div class="t" style="left:438.4px;top:633.45px;height:13.3px;line-height:13.3px;padding:0 2.9px 0 3.1px;background:#6cb784;border-radius:2px;font-size:7.45px;font-weight:700;color:#fff"><span style="visibility:hidden">681,00 Kč</span><span style="position:absolute;left:3.1px;top:0;font-size:8.195px;transform:scaleX(0.9091);transform-origin:0 0">681,00 Kč</span></div>
<div class="t" style="left:536.00px;top:635.93px;font-size:8.470px;line-height:8.470px;font-weight:400;color:#363a41;transform:scaleX(0.9091);transform-origin:0 0;">ČSOB - platební brána</div>
<div class="b" style="left:631.00px;top:633.80px;width:45.80px;height:12.60px;background:#1fb98a;border-radius:2px"></div>
<div class="t" style="left:634.70px;top:635.96px;font-size:8.910px;line-height:8.910px;font-weight:700;color:#fff;transform:scaleX(0.9091);transform-origin:0 0;-webkit-text-stroke:0.2px currentColor;">Odeslána</div>
<div class="t" style="left:789.00px;top:635.93px;font-size:8.470px;line-height:8.470px;font-weight:400;color:#363a41;transform:scaleX(0.9091);transform-origin:0 0;">30.05.2022 14:41:00</div>
<svg class="b" style="left:902px;top:634.60px" width="10" height="10" viewBox="0 0 10 10"><circle cx="4" cy="4" r="2.85" fill="none" stroke="#6f878e" stroke-width="0.95"/><circle cx="4" cy="4" r="0.7" fill="#b5c3c7"/><path d="M6.1 6.1 L8.6 8.6" stroke="#6f878e" stroke-width="1.15"/></svg>
<div class="b" style="left:15.00px;top:676.80px;width:969.00px;height:1.00px;background:#dde6ea"></div>
<div class="b" style="left:18.90px;top:659.35px;width:11.40px;height:11.60px;box-sizing:border-box;border:1.5px solid #b8cbd1;border-radius:1.5px;background:#fff"></div>
<div class="t" style="left:43.00px;top:660.68px;font-size:8.470px;line-height:8.470px;font-weight:400;color:#363a41;transform:scaleX(0.9091);transform-origin:0 0;">90</div>
<div class="t" style="left:136.25px;top:660.68px;font-size:8.470px;line-height:8.470px;font-weight:400;color:#363a41;transform:scaleX(0.9091);transform-origin:0 0;">722465590</div>
<div class="t" style="left:228.00px;top:660.68px;font-size:8.470px;line-height:8.470px;font-weight:400;color:#363a41;transform:scaleX(0.9091);transform-origin:0 0;">Ano</div>
<div class="t" style="left:272.00px;top:660.68px;font-size:8.470px;line-height:8.470px;font-weight:400;color:#363a41;transform:scaleX(0.9091);transform-origin:0 0;">Česko</div>
<svg class="b" style="left:338px;top:656.55px;filter:blur(1.0px);opacity:1" width="60" height="16" viewBox="0 0 60 16"><text x="3.5" y="10.80" font-family="Liberation Sans" font-size="7.7" fill="#25b9d7" textLength="39.4" lengthAdjust="spacingAndGlyphs">M. Tavantzi</text></svg>
<div class="t" style="left:438.4px;top:658.20px;height:13.3px;line-height:13.3px;padding:0 2.9px 0 3.1px;background:#6cb784;border-radius:2px;font-size:7.45px;font-weight:700;color:#fff"><span style="visibility:hidden">759,00 Kč</span><span style="position:absolute;left:3.1px;top:0;font-size:8.195px;transform:scaleX(0.9091);transform-origin:0 0">759,00 Kč</span></div>
<div class="t" style="left:536.00px;top:660.68px;font-size:8.470px;line-height:8.470px;font-weight:400;color:#363a41;transform:scaleX(0.9091);transform-origin:0 0;">Dobírka</div>
<div class="b" style="left:631.00px;top:658.55px;width:45.80px;height:12.60px;background:#1fb98a;border-radius:2px"></div>
<div class="t" style="left:634.70px;top:660.71px;font-size:8.910px;line-height:8.910px;font-weight:700;color:#fff;transform:scaleX(0.9091);transform-origin:0 0;-webkit-text-stroke:0.2px currentColor;">Odeslána</div>
<div class="t" style="left:789.00px;top:660.68px;font-size:8.470px;line-height:8.470px;font-weight:400;color:#363a41;transform:scaleX(0.9091);transform-origin:0 0;">30.05.2022 09:07:00</div>
<svg class="b" style="left:902px;top:659.35px" width="10" height="10" viewBox="0 0 10 10"><circle cx="4" cy="4" r="2.85" fill="none" stroke="#6f878e" stroke-width="0.95"/><circle cx="4" cy="4" r="0.7" fill="#b5c3c7"/><path d="M6.1 6.1 L8.6 8.6" stroke="#6f878e" stroke-width="1.15"/></svg>
<div class="b" style="left:15.00px;top:702.00px;width:969.00px;height:1.00px;background:#dde6ea"></div>
<div class="b" style="left:18.90px;top:684.40px;width:11.40px;height:11.60px;box-sizing:border-box;border:1.5px solid #b8cbd1;border-radius:1.5px;background:#fff"></div>
<div class="t" style="left:43.00px;top:685.73px;font-size:8.470px;line-height:8.470px;font-weight:400;color:#363a41;transform:scaleX(0.9091);transform-origin:0 0;">89</div>
<div class="t" style="left:136.25px;top:685.73px;font-size:8.470px;line-height:8.470px;font-weight:400;color:#363a41;transform:scaleX(0.9091);transform-origin:0 0;">910763436</div>
<div class="t" style="left:228.00px;top:685.73px;font-size:8.470px;line-height:8.470px;font-weight:400;color:#363a41;transform:scaleX(0.9091);transform-origin:0 0;">Ano</div>
<div class="t" style="left:272.00px;top:685.73px;font-size:8.470px;line-height:8.470px;font-weight:400;color:#363a41;transform:scaleX(0.9091);transform-origin:0 0;">Česko</div>
<svg class="b" style="left:338px;top:681.60px;filter:blur(1.0px);opacity:1" width="60" height="16" viewBox="0 0 60 16"><text x="3.5" y="10.80" font-family="Liberation Sans" font-size="7.7" fill="#25b9d7" textLength="37.3" lengthAdjust="spacingAndGlyphs">D. Lechner</text></svg>
<div class="t" style="left:438.4px;top:683.25px;height:13.3px;line-height:13.3px;padding:0 2.9px 0 3.1px;background:#6cb784;border-radius:2px;font-size:7.45px;font-weight:700;color:#fff"><span style="visibility:hidden">1 039,00 Kč</span><span style="position:absolute;left:3.1px;top:0;font-size:8.195px;transform:scaleX(0.9091);transform-origin:0 0">1 039,00 Kč</span></div>
<div class="t" style="left:536.00px;top:685.73px;font-size:8.470px;line-height:8.470px;font-weight:400;color:#363a41;transform:scaleX(0.9091);transform-origin:0 0;">ČSOB - platební brána</div>
<div class="b" style="left:631.00px;top:683.60px;width:45.80px;height:12.60px;background:#1fb98a;border-radius:2px"></div>
<div class="t" style="left:634.70px;top:685.76px;font-size:8.910px;line-height:8.910px;font-weight:700;color:#fff;transform:scaleX(0.9091);transform-origin:0 0;-webkit-text-stroke:0.2px currentColor;">Odeslána</div>
<div class="t" style="left:789.00px;top:685.73px;font-size:8.470px;line-height:8.470px;font-weight:400;color:#363a41;transform:scaleX(0.9091);transform-origin:0 0;">26.05.2022 08:56:43</div>
<svg class="b" style="left:902px;top:684.40px" width="10" height="10" viewBox="0 0 10 10"><circle cx="4" cy="4" r="2.85" fill="none" stroke="#6f878e" stroke-width="0.95"/><circle cx="4" cy="4" r="0.7" fill="#b5c3c7"/><path d="M6.1 6.1 L8.6 8.6" stroke="#6f878e" stroke-width="1.15"/></svg>
<div class="b" style="left:15.00px;top:726.10px;width:969.00px;height:1.00px;background:#dde6ea"></div>
<div class="b" style="left:18.90px;top:709.05px;width:11.40px;height:11.60px;box-sizing:border-box;border:1.5px solid #b8cbd1;border-radius:1.5px;background:#fff"></div>
<div class="t" style="left:43.00px;top:710.38px;font-size:8.470px;line-height:8.470px;font-weight:400;color:#363a41;transform:scaleX(0.9091);transform-origin:0 0;">88</div>
<div class="t" style="left:136.25px;top:710.38px;font-size:8.470px;line-height:8.470px;font-weight:400;color:#363a41;transform:scaleX(0.9091);transform-origin:0 0;">750583985</div>
<div class="t" style="left:228.00px;top:710.38px;font-size:8.470px;line-height:8.470px;font-weight:400;color:#363a41;transform:scaleX(0.9091);transform-origin:0 0;">Ano</div>
<div class="t" style="left:272.00px;top:710.38px;font-size:8.470px;line-height:8.470px;font-weight:400;color:#363a41;transform:scaleX(0.9091);transform-origin:0 0;">Česko</div>
<svg class="b" style="left:338px;top:706.25px;filter:blur(1.0px);opacity:1" width="60" height="16" viewBox="0 0 60 16"><text x="3.5" y="10.80" font-family="Liberation Sans" font-size="7.7" fill="#25b9d7" textLength="47.6" lengthAdjust="spacingAndGlyphs">M. Opatřilová</text></svg>
<div class="t" style="left:438.4px;top:707.90px;height:13.3px;line-height:13.3px;padding:0 2.9px 0 3.1px;background:#6cb784;border-radius:2px;font-size:7.45px;font-weight:700;color:#fff"><span style="visibility:hidden">781,00 Kč</span><span style="position:absolute;left:3.1px;top:0;font-size:8.195px;transform:scaleX(0.9091);transform-origin:0 0">781,00 Kč</span></div>
<div class="t" style="left:536.00px;top:710.38px;font-size:8.470px;line-height:8.470px;font-weight:400;color:#363a41;transform:scaleX(0.9091);transform-origin:0 0;">ČSOB - platební brána</div>
<div class="b" style="left:631.00px;top:708.25px;width:45.80px;height:12.60px;background:#1fb98a;border-radius:2px"></div>
<div class="t" style="left:634.70px;top:710.41px;font-size:8.910px;line-height:8.910px;font-weight:700;color:#fff;transform:scaleX(0.9091);transform-origin:0 0;-webkit-text-stroke:0.2px currentColor;">Odeslána</div>
<div class="t" style="left:789.00px;top:710.38px;font-size:8.470px;line-height:8.470px;font-weight:400;color:#363a41;transform:scaleX(0.9091);transform-origin:0 0;">25.05.2022 11:50:44</div>
<svg class="b" style="left:902px;top:709.05px" width="10" height="10" viewBox="0 0 10 10"><circle cx="4" cy="4" r="2.85" fill="none" stroke="#6f878e" stroke-width="0.95"/><circle cx="4" cy="4" r="0.7" fill="#b5c3c7"/><path d="M6.1 6.1 L8.6 8.6" stroke="#6f878e" stroke-width="1.15"/></svg>
<div class="b" style="left:15.00px;top:751.30px;width:969.00px;height:1.00px;background:#dde6ea"></div>
<div class="b" style="left:18.90px;top:733.70px;width:11.40px;height:11.60px;box-sizing:border-box;border:1.5px solid #b8cbd1;border-radius:1.5px;background:#fff"></div>
<div class="t" style="left:43.00px;top:735.03px;font-size:8.470px;line-height:8.470px;font-weight:400;color:#363a41;transform:scaleX(0.9091);transform-origin:0 0;">87</div>
<div class="t" style="left:136.25px;top:735.03px;font-size:8.470px;line-height:8.470px;font-weight:400;color:#363a41;transform:scaleX(0.9091);transform-origin:0 0;">454820984</div>
<div class="t" style="left:228.00px;top:735.03px;font-size:8.470px;line-height:8.470px;font-weight:400;color:#363a41;transform:scaleX(0.9091);transform-origin:0 0;">Ano</div>
<div class="t" style="left:272.00px;top:735.03px;font-size:8.470px;line-height:8.470px;font-weight:400;color:#363a41;transform:scaleX(0.9091);transform-origin:0 0;">Česko</div>
<svg class="b" style="left:338px;top:730.90px;filter:blur(1.0px);opacity:1" width="60" height="16" viewBox="0 0 60 16"><text x="3.5" y="10.80" font-family="Liberation Sans" font-size="7.7" fill="#25b9d7" textLength="38.9" lengthAdjust="spacingAndGlyphs">J. Conoeva</text></svg>
<div class="t" style="left:438.4px;top:732.55px;height:13.3px;line-height:13.3px;padding:0 2.9px 0 3.1px;background:#6cb784;border-radius:2px;font-size:7.45px;font-weight:700;color:#fff"><span style="visibility:hidden">425,00 Kč</span><span style="position:absolute;left:3.1px;top:0;font-size:8.195px;transform:scaleX(0.9091);transform-origin:0 0">425,00 Kč</span></div>
<div class="t" style="left:536.00px;top:735.03px;font-size:8.470px;line-height:8.470px;font-weight:400;color:#363a41;transform:scaleX(0.9091);transform-origin:0 0;">Dobírka</div>
<div class="b" style="left:631.00px;top:732.90px;width:45.80px;height:12.60px;background:#1fb98a;border-radius:2px"></div>
<div class="t" style="left:634.70px;top:735.06px;font-size:8.910px;line-height:8.910px;font-weight:700;color:#fff;transform:scaleX(0.9091);transform-origin:0 0;-webkit-text-stroke:0.2px currentColor;">Odeslána</div>
<div class="t" style="left:789.00px;top:735.03px;font-size:8.470px;line-height:8.470px;font-weight:400;color:#363a41;transform:scaleX(0.9091);transform-origin:0 0;">24.05.2022 19:27:36</div>
<svg class="b" style="left:902px;top:733.70px" width="10" height="10" viewBox="0 0 10 10"><circle cx="4" cy="4" r="2.85" fill="none" stroke="#6f878e" stroke-width="0.95"/><circle cx="4" cy="4" r="0.7" fill="#b5c3c7"/><path d="M6.1 6.1 L8.6 8.6" stroke="#6f878e" stroke-width="1.15"/></svg>
<div class="b" style="left:15.00px;top:775.70px;width:969.00px;height:1.00px;background:#dde6ea"></div>
<div class="b" style="left:18.90px;top:758.50px;width:11.40px;height:11.60px;box-sizing:border-box;border:1.5px solid #b8cbd1;border-radius:1.5px;background:#fff"></div>
<div class="t" style="left:43.00px;top:759.83px;font-size:8.470px;line-height:8.470px;font-weight:400;color:#363a41;transform:scaleX(0.9091);transform-origin:0 0;">86</div>
<div class="t" style="left:136.25px;top:759.83px;font-size:8.470px;line-height:8.470px;font-weight:400;color:#363a41;transform:scaleX(0.9091);transform-origin:0 0;">390555827</div>
<div class="t" style="left:228.00px;top:759.83px;font-size:8.470px;line-height:8.470px;font-weight:400;color:#363a41;transform:scaleX(0.9091);transform-origin:0 0;">Ano</div>
<div class="t" style="left:272.00px;top:759.83px;font-size:8.470px;line-height:8.470px;font-weight:400;color:#363a41;transform:scaleX(0.9091);transform-origin:0 0;">Česko</div>
<svg class="b" style="left:338px;top:755.70px;filter:blur(1.0px);opacity:1" width="60" height="16" viewBox="0 0 60 16"><text x="3.5" y="10.80" font-family="Liberation Sans" font-size="7.7" fill="#25b9d7" textLength="40" lengthAdjust="spacingAndGlyphs">J. Mikešová</text></svg>
<div class="t" style="left:438.4px;top:757.35px;height:13.3px;line-height:13.3px;padding:0 2.9px 0 3.1px;background:#6cb784;border-radius:2px;font-size:7.45px;font-weight:700;color:#fff"><span style="visibility:hidden">218,00 Kč</span><span style="position:absolute;left:3.1px;top:0;font-size:8.195px;transform:scaleX(0.9091);transform-origin:0 0">218,00 Kč</span></div>
<div class="t" style="left:536.00px;top:759.83px;font-size:8.470px;line-height:8.470px;font-weight:400;color:#363a41;transform:scaleX(0.9091);transform-origin:0 0;">ČSOB - platební brána</div>
<div class="b" style="left:631.00px;top:757.70px;width:39.50px;height:12.60px;background:#1fb98a;border-radius:2px"></div>
<div class="t" style="left:634.70px;top:759.86px;font-size:8.910px;line-height:8.910px;font-weight:700;color:#fff;transform:scaleX(0.9091);transform-origin:0 0;-webkit-text-stroke:0.2px currentColor;">Dodáno</div>
<div class="t" style="left:789.00px;top:759.83px;font-size:8.470px;line-height:8.470px;font-weight:400;color:#363a41;transform:scaleX(0.9091);transform-origin:0 0;">24.05.2022 18:16:34</div>
<svg class="b" style="left:902px;top:758.50px" width="10" height="10" viewBox="0 0 10 10"><circle cx="4" cy="4" r="2.85" fill="none" stroke="#6f878e" stroke-width="0.95"/><circle cx="4" cy="4" r="0.7" fill="#b5c3c7"/><path d="M6.1 6.1 L8.6 8.6" stroke="#6f878e" stroke-width="1.15"/></svg>
<div class="b" style="left:15.00px;top:800.30px;width:969.00px;height:1.00px;background:#dde6ea"></div>
<div class="b" style="left:18.90px;top:783.00px;width:11.40px;height:11.60px;box-sizing:border-box;border:1.5px solid #b8cbd1;border-radius:1.5px;background:#fff"></div>
<div class="t" style="left:43.00px;top:784.33px;font-size:8.470px;line-height:8.470px;font-weight:400;color:#363a41;transform:scaleX(0.9091);transform-origin:0 0;">85</div>
<div class="t" style="left:136.25px;top:784.33px;font-size:8.470px;line-height:8.470px;font-weight:400;color:#363a41;transform:scaleX(0.9091);transform-origin:0 0;">193676313</div>
<div class="t" style="left:228.00px;top:784.33px;font-size:8.470px;line-height:8.470px;font-weight:400;color:#363a41;transform:scaleX(0.9091);transform-origin:0 0;">Ano</div>
<div class="t" style="left:272.00px;top:784.33px;font-size:8.470px;line-height:8.470px;font-weight:400;color:#363a41;transform:scaleX(0.9091);transform-origin:0 0;">Česko</div>
<svg class="b" style="left:338px;top:780.20px;filter:blur(1.0px);opacity:1" width="60" height="16" viewBox="0 0 60 16"><text x="3.5" y="10.80" font-family="Liberation Sans" font-size="7.7" fill="#25b9d7" textLength="45.5" lengthAdjust="spacingAndGlyphs">G. Vyhnalová</text></svg>
<div class="t" style="left:438.50px;top:784.33px;font-size:8.470px;line-height:8.470px;font-weight:400;color:#363a41;transform:scaleX(0.9091);transform-origin:0 0;">170,00 Kč</div>
<div class="t" style="left:536.00px;top:784.33px;font-size:8.470px;line-height:8.470px;font-weight:400;color:#363a41;transform:scaleX(0.9091);transform-origin:0 0;">Dobírka</div>
<div class="b" style="left:631.00px;top:782.20px;width:104.00px;height:12.60px;background:#56a7a6;border-radius:2px"></div>
<div class="t" style="left:634.70px;top:784.36px;font-size:8.910px;line-height:8.910px;font-weight:700;color:#2a3b3e;transform:scaleX(0.9091);transform-origin:0 0;-webkit-text-stroke:0.2px currentColor;">Připraveno k vyzvednutí</div>
<div class="t" style="left:789.00px;top:784.33px;font-size:8.470px;line-height:8.470px;font-weight:400;color:#363a41;transform:scaleX(0.9091);transform-origin:0 0;">23.05.2022 22:30:18</div>
<svg class="b" style="left:902px;top:783.00px" width="10" height="10" viewBox="0 0 10 10"><circle cx="4" cy="4" r="2.85" fill="none" stroke="#6f878e" stroke-width="0.95"/><circle cx="4" cy="4" r="0.7" fill="#b5c3c7"/><path d="M6.1 6.1 L8.6 8.6" stroke="#6f878e" stroke-width="1.15"/></svg>
<div class="b" style="left:15.00px;top:825.70px;width:969.00px;height:1.00px;background:#dde6ea"></div>
<div class="b" style="left:18.90px;top:808.00px;width:11.40px;height:11.60px;box-sizing:border-box;border:1.5px solid #b8cbd1;border-radius:1.5px;background:#fff"></div>
<div class="t" style="left:43.00px;top:809.33px;font-size:8.470px;line-height:8.470px;font-weight:400;color:#363a41;transform:scaleX(0.9091);transform-origin:0 0;">84</div>
<div class="t" style="left:136.25px;top:809.33px;font-size:8.470px;line-height:8.470px;font-weight:400;color:#363a41;transform:scaleX(0.9091);transform-origin:0 0;">716155078</div>
<div class="t" style="left:228.00px;top:809.33px;font-size:8.470px;line-height:8.470px;font-weight:400;color:#363a41;transform:scaleX(0.9091);transform-origin:0 0;">Ano</div>
<div class="t" style="left:272.00px;top:809.33px;font-size:8.470px;line-height:8.470px;font-weight:400;color:#363a41;transform:scaleX(0.9091);transform-origin:0 0;">Česko</div>
<svg class="b" style="left:338px;top:805.20px;filter:blur(1.0px);opacity:1" width="60" height="16" viewBox="0 0 60 16"><text x="3.5" y="10.80" font-family="Liberation Sans" font-size="7.7" fill="#25b9d7" textLength="43.5" lengthAdjust="spacingAndGlyphs">M. Průchová</text></svg>
<div class="t" style="left:438.4px;top:806.85px;height:13.3px;line-height:13.3px;padding:0 2.9px 0 3.1px;background:#6cb784;border-radius:2px;font-size:7.45px;font-weight:700;color:#fff"><span style="visibility:hidden">184,00 Kč</span><span style="position:absolute;left:3.1px;top:0;font-size:8.195px;transform:scaleX(0.9091);transform-origin:0 0">184,00 Kč</span></div>
<div class="t" style="left:536.00px;top:809.33px;font-size:8.470px;line-height:8.470px;font-weight:400;color:#363a41;transform:scaleX(0.9091);transform-origin:0 0;">Dobírka</div>
<div class="b" style="left:631.00px;top:807.20px;width:45.80px;height:12.60px;background:#1fb98a;border-radius:2px"></div>
<div class="t" style="left:634.70px;top:809.36px;font-size:8.910px;line-height:8.910px;font-weight:700;color:#fff;transform:scaleX(0.9091);transform-origin:0 0;-webkit-text-stroke:0.2px currentColor;">Odeslána</div>
<div class="t" style="left:789.00px;top:809.33px;font-size:8.470px;line-height:8.470px;font-weight:400;color:#363a41;transform:scaleX(0.9091);transform-origin:0 0;">23.05.2022 21:27:22</div>
<svg class="b" style="left:902px;top:808.00px" width="10" height="10" viewBox="0 0 10 10"><circle cx="4" cy="4" r="2.85" fill="none" stroke="#6f878e" stroke-width="0.95"/><circle cx="4" cy="4" r="0.7" fill="#b5c3c7"/><path d="M6.1 6.1 L8.6 8.6" stroke="#6f878e" stroke-width="1.15"/></svg>
<div class="b" style="left:0.00px;top:827.00px;width:1000.00px;height:173.00px;background:#fff"></div>
<div class="b" style="left:108.50px;top:380.60px;width:109.80px;height:446.20px;box-sizing:border-box;border:3.3px solid #ff0500;border-radius:20px"></div>
</div></body></html>
